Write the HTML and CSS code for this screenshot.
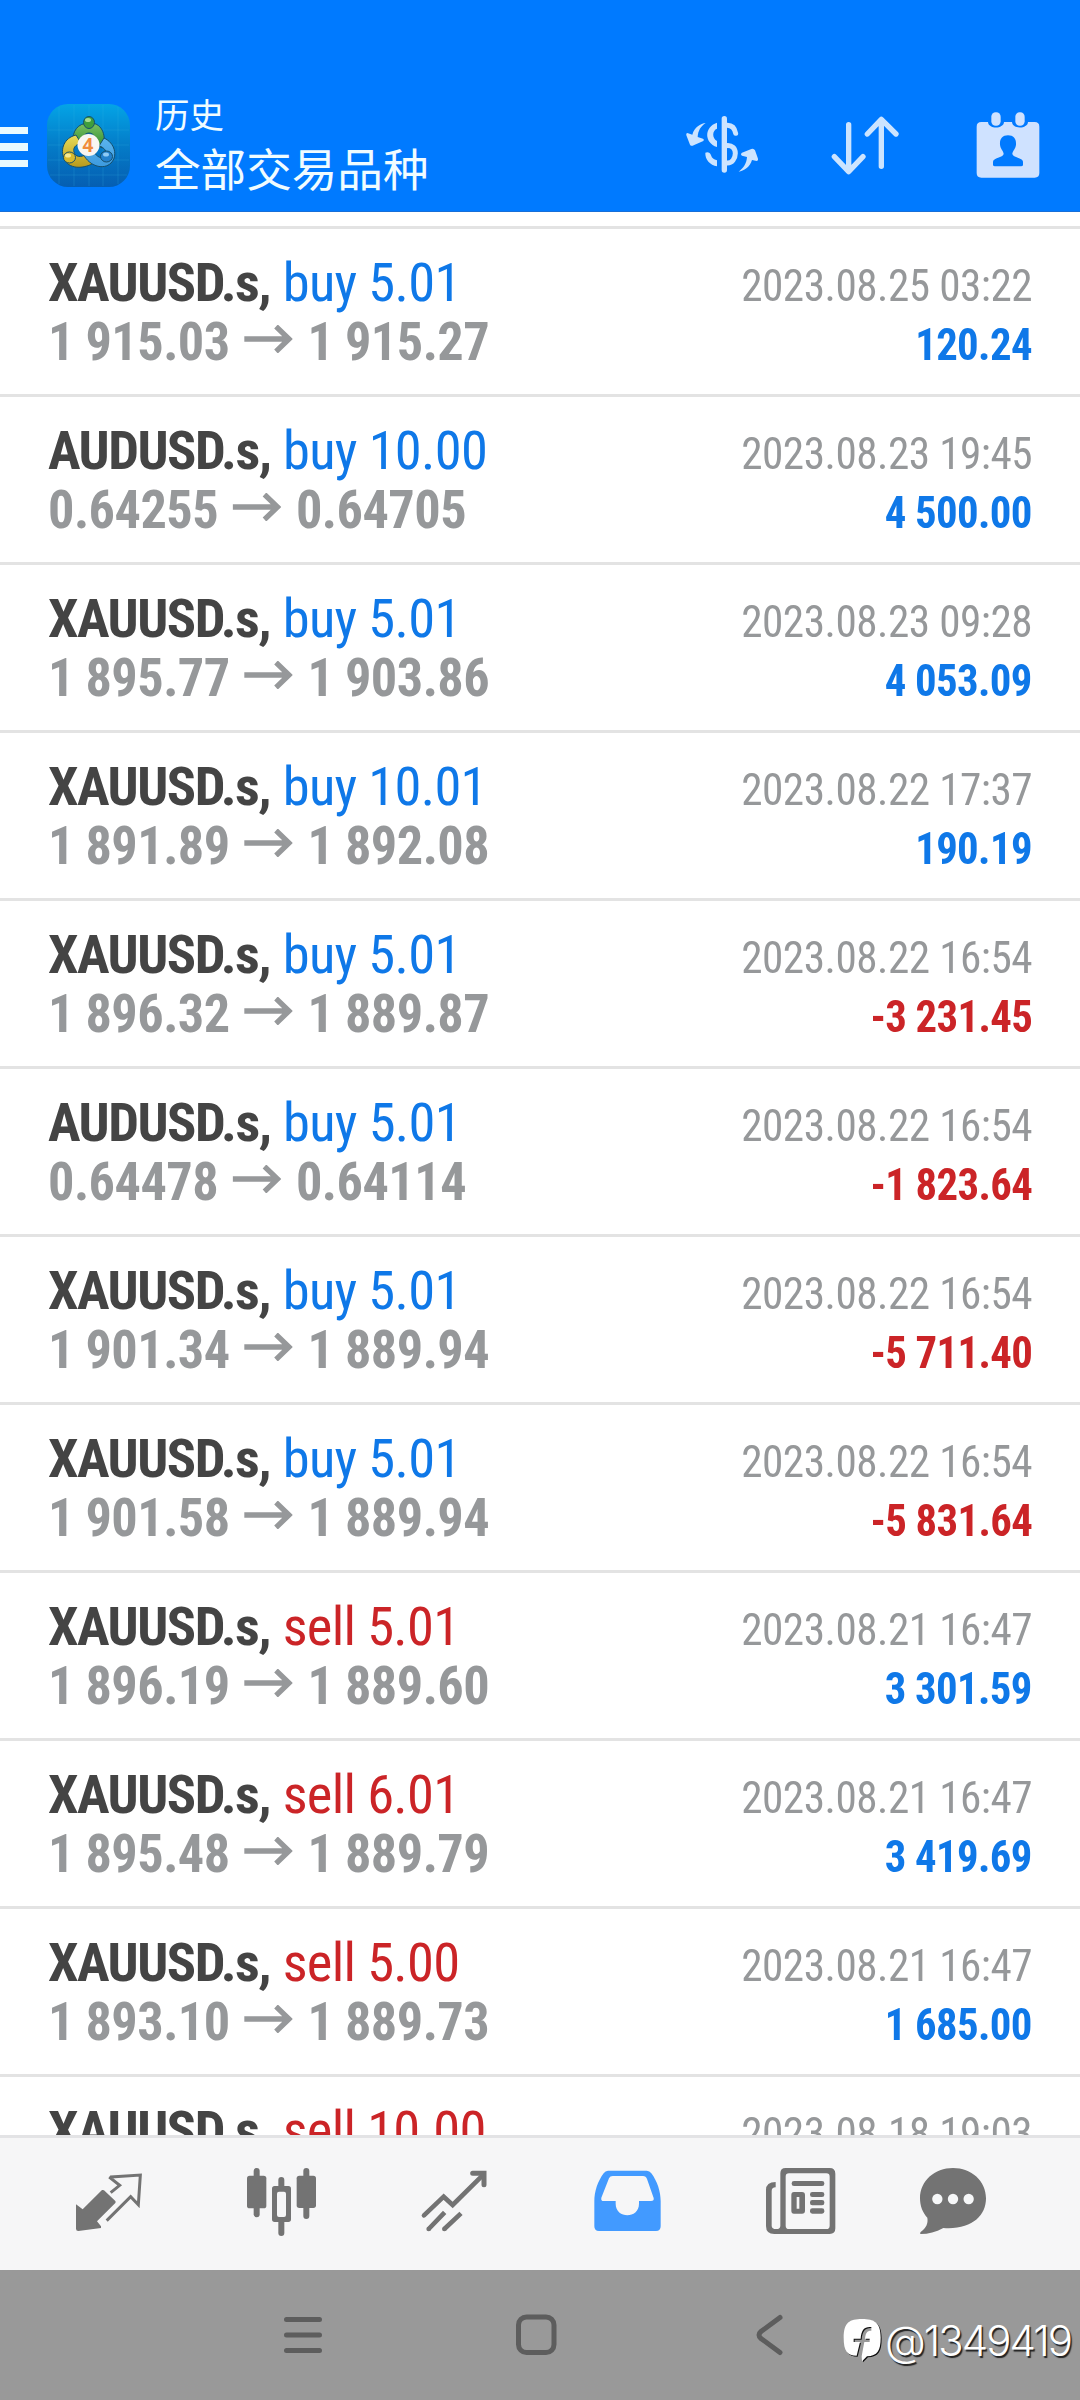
FILE: index.html
```html
<!DOCTYPE html>
<html lang="zh-CN">
<head>
<meta charset="utf-8">
<title>历史</title>
<link rel="stylesheet" href="styles.css">
</head>
<body>
<div class="screen">
  <header class="topbar">
    <div class="burger"><i></i><i></i><i></i></div>
    <svg class="logo" viewBox="0 0 83 83">
      <defs>
        <linearGradient id="bg" x1="0" y1="0" x2="0" y2="1"><stop offset="0" stop-color="#04a4e6"/><stop offset=".5" stop-color="#047cc8"/><stop offset="1" stop-color="#055eb2"/></linearGradient>
        <linearGradient id="gr" x1="0" y1="0" x2="0" y2="1"><stop offset="0" stop-color="#7cc263"/><stop offset="1" stop-color="#2c8b30"/></linearGradient>
        <linearGradient id="ye" x1="0" y1="0" x2="0" y2="1"><stop offset="0" stop-color="#e9dc58"/><stop offset="1" stop-color="#b99a1c"/></linearGradient>
        <linearGradient id="bl" x1="0" y1="0" x2="0" y2="1"><stop offset="0" stop-color="#5bb4ee"/><stop offset="1" stop-color="#3c9ade"/></linearGradient>
      </defs>
      <rect width="83" height="83" rx="21" fill="url(#bg)"/>
      <path d="M12 3V80M27 1V82M42 1V82M56 1V82M71 3V80M1 26H82M1 41H82M1 56H82M3 71H80" stroke="#35b4e6" stroke-opacity=".22" fill="none"/>
      <g stroke="#164f6b" stroke-width="1">
        <path d="M42 19C54 18 60 30 56 44L48 41C50 35 47 29 42 29S34 35 35 40L26 38C25 27 31 19 42 19Z" fill="url(#gr)"/>
        <path d="M29 31C17 34 13 45 17 55C22 65 35 65 45 60L40 50C34 54 28 53 27 48C26 44 28 41 34 39Z" fill="url(#ye)"/>
        <path d="M57 34C68 39 71 52 64 59C57 66 43 63 36 50L46 47C50 53 55 56 58 52C61 48 57 43 52 42Z" fill="url(#bl)"/>
        <ellipse cx="42" cy="18.500" rx="5.500" ry="6" fill="#3f9e3c"/>
        <ellipse cx="22.500" cy="53.500" rx="6" ry="5.500" fill="#d8b92c"/>
        <ellipse cx="59.500" cy="52.500" rx="6" ry="5.500" fill="#2381cd"/>
      </g>
      <ellipse cx="41" cy="16" rx="3" ry="2" fill="#a7dc90"/>
      <ellipse cx="21" cy="51.500" rx="3" ry="2" fill="#f7ea93"/>
      <ellipse cx="59" cy="50.500" rx="3" ry="2" fill="#8fcaf4"/>
      <circle cx="41.500" cy="41" r="11" fill="#f8f6f2"/>
      <text class="logo-digit" x="41" y="48" text-anchor="middle">4</text>
    </svg>
    <div class="titles">
      <div class="title">历史</div>
      <div class="subtitle">全部交易品种</div>
    </div>
    <div class="actions">
      <svg viewBox="66 48 240 240">
        <path d="M193 86V240" stroke="#cce4ff" stroke-width="16" stroke-linecap="round"/>
        <path d="M197 106C215 104 224 113 227 130M198 167C217 164 226 176 226 190S217 222 198 219" fill="none" stroke="#cce4ff" stroke-width="15" stroke-linecap="round"/>
        <path d="M171 98V116C157 121 155 143 171 153V171C132 158 132 111 171 98ZM136 188C143 184 151 188 153 196C156 205 161 208 171 211V229C150 225 135 209 136 188Z" fill="#cce4ff"/>
        <path d="M137 99C122 100 103 112 97 134L82 129Q77 130 79 136L90 164Q94 170 101 166L130 153Q134 148 129 146L113 141C114 122 122 109 137 99Z" fill="#cce4ff"/>
        <path d="M236 245C251 243 270 232 276 210L290 213Q296 212 294 206L285 181Q281 174 274 177L246 188Q240 193 246 197L261 201C260 220 250 235 236 245Z" fill="#cce4ff"/>
      </svg>
      <svg viewBox="495 48 240 240">
        <path d="M566 104V244M523 200L566 245L609 200M664 229V89M622 132L664 88L708 132" fill="none" stroke="#cce4ff" stroke-width="16" stroke-linecap="round" stroke-linejoin="round"/>
      </svg>
      <svg viewBox="924 48 240 240">
        <path d="M964 96H984C985 118 1031 118 1032 96H1056C1057 118 1103 118 1104 96H1124Q1138 96 1138 110V249Q1138 263 1124 263H964Q950 263 950 249V110Q950 96 964 96ZM1044 136C1027 136 1019 147 1020 163C1020 176 1031 184 1031 192C1029 203 999 203 999 216V224Q999 229 1005 229H1083Q1089 229 1089 224V216C1089 203 1059 203 1057 192C1057 184 1068 176 1068 163C1069 147 1061 136 1044 136Z" fill="#cfe2ff" fill-rule="evenodd"/>
        <rect x="994" y="67" width="28" height="40" rx="13" fill="#cfe2ff"/><rect x="1066" y="67" width="28" height="40" rx="13" fill="#cfe2ff"/>
      </svg>
    </div>
  </header>

  <main class="list" id="list"></main>

  <nav class="tabs">
    <svg viewBox="26 42 240 240">
      <path d="M125 120Q128 119 131 121L165 153Q167 156 165 159L110 214L122 229V234L54 243Q47 243 47 236V163L51 166L67 178Z" fill="#737373"/>
      <path d="M151 128L178 106L150 84L152 81L240 75L234 164L211 140L139 212" fill="none" stroke="#737373" stroke-width="9"/>
    </svg>
    <svg viewBox="545 42 240 240" fill="#737373">
      <rect x="580" y="54" width="18" height="148" rx="9"/><rect x="560" y="77" width="58" height="98" rx="8"/>
      <rect x="729" y="54" width="18" height="153" rx="9"/><rect x="709" y="77" width="58" height="97" rx="8"/>
      <rect x="654" y="81" width="18" height="40" rx="9"/><rect x="654" y="205" width="18" height="53" rx="9"/>
      <path d="M643 108H684Q692 108 692 116V208Q692 216 684 216H643Q635 216 635 208V116Q635 108 643 108ZM656 125Q650 125 650 131V195Q650 201 656 201H671Q677 201 677 195V131Q677 125 671 125Z" fill-rule="evenodd"/>
    </svg>
    <svg viewBox="1065 42 240 240" fill="none" stroke="#737373">
      <path d="M1092 196L1151 140L1178 165L1270 74" stroke-width="14" stroke-linecap="round"/>
      <path d="M1238 70H1272V104" stroke-width="15" stroke-linecap="round"/>
      <path d="M1106 237L1154 187M1153 237L1203 190" stroke-width="14"/>
      <path d="M1106 237h.1M1153 237h.1" stroke-width="14" stroke-linecap="round"/>
    </svg>
    <svg viewBox="24 42 240 240">
      <path d="M84 62H200Q209 62 214 70C232 94 242 125 242 153V229Q242 243 228 243H57Q43 243 43 229V153C43 125 53 94 71 70Q76 62 84 62ZM98 78Q90 78 87 85L64 143Q62 153 71 153H107V161C107 207 177 207 177 161V153H213Q223 153 221 144L201 87Q198 78 189 78Z" fill="#429aff" fill-rule="evenodd"/>
    </svg>
    <svg viewBox="544 42 240 240">
      <path d="M618 54H750Q767 54 767 71V235Q767 252 750 252H584Q559 252 559 228V120Q559 96 588 96V112Q576 112 576 123V227Q576 237 590 237Q602 237 602 227V70Q602 54 618 54ZM628 70Q618 70 618 80V227Q618 237 628 237H740Q750 237 750 227V80Q750 70 740 70Z" fill="#737373" fill-rule="evenodd"/>
      <rect x="636" y="93" width="98" height="15" rx="7" fill="#737373"/>
      <path d="M643 126H667Q676 126 676 135V182Q676 191 667 191H643Q635 191 635 182V135Q635 126 643 126ZM651 141V176H659V141Z" fill="#737373" fill-rule="evenodd"/>
      <g fill="#737373"><rect x="691" y="126" width="43" height="15" rx="7"/><rect x="691" y="150" width="43" height="16" rx="7"/><rect x="691" y="175" width="43" height="16" rx="7"/></g>
    </svg>
    <svg viewBox="999 42 240 240">
      <path d="M1119 54C1174 54 1218 92 1218 145S1174 240 1090 234C1067 246 1046 252 1022 252Q1018 250 1022 246C1038 234 1045 221 1042 203C1028 188 1020 168 1020 145C1020 92 1064 54 1119 54Z" fill="#737373"/>
      <g fill="#f6f7f8"><circle cx="1072" cy="147" r="15.500"/><circle cx="1119" cy="147" r="15.500"/><circle cx="1166" cy="147" r="15.500"/></g>
    </svg>
  </nav>

  <footer class="sysnav">
    <svg viewBox="0 0 60 60"><path d="M13.500 14.500H46.500M13.500 30H46.500M13.500 45.500H46.500"/></svg>
    <svg viewBox="0 0 60 60"><rect x="11.500" y="12" width="35.500" height="35.500" rx="8"/></svg>
    <svg viewBox="0 0 60 60"><path d="M40 12.500L21 26.500Q17 30 21 33.500L40 47.500"/></svg>
    <div class="watermark">
      <svg viewBox="308 60 126 144">
        <path d="M368 66C405 66 424 76 424 122C424 162 414 176 383 178L368 193L367 178Q372 150 375 135H391V125H377C379 108 382 101 396 101V90C375 88 366 98 364 125H343V135H362L352 176C324 176 313 162 313 122C313 76 331 66 368 66Z" fill="#fff"/>
      </svg>
      <span>@1349419</span>
    </div>
  </footer>
</div>
<script src="app.js"></script>
</body>
</html>
```
FILE: styles.css
```css
* { box-sizing: border-box; }
body { margin: 0; background: #fff; }
.screen {
  width: 1080px;
  height: 2400px;
  display: flex;
  flex-direction: column;
  overflow: hidden;
  font-family: "Roboto Condensed", Roboto, "Noto Sans CJK SC", sans-serif;
}
.topbar {
  height: 212px;
  flex: none;
  padding: 80px 32px 0 0;
  display: flex;
  align-items: center;
  background: #007aff;
  border-bottom: 1px solid #176fd8;
  color: #fff;
}
.burger { width: 28px; display: flex; flex-direction: column; gap: 9px; padding-top: 3px; }
.burger i { height: 7.5px; background: #e9faff; }
.logo { width: 83px; height: 83px; margin-left: 19px; }
.logo-digit { font: 700 19px "Open Sans", sans-serif; fill: #f08c3c; }
.titles { margin-left: 25px; padding-bottom: 1px; font-family: "Noto Sans CJK SC", sans-serif; color: #f0fcff; }
.title { font-size: 34.5px; line-height: 44px; }
.subtitle { font-size: 45.6px; line-height: 65px; }
.actions { margin-left: auto; display: flex; gap: 63px; }
.actions svg { width: 80px; height: 80px; }

.list { flex: 1; min-height: 0; overflow: hidden; padding-top: 14px; }
.deal { height: 168px; border-top: 3px solid #e3e3e3; padding: 24px 48px 0; }
.line { height: 59px; display: flex; justify-content: space-between; align-items: baseline; line-height: 59px; white-space: nowrap; }
.main { font-size: 54.5px; }
.symbol { font-weight: 700; color: #444; letter-spacing: -1.5px; }
.side { letter-spacing: -.7px; }
.buy, .plus { color: #0f78e8; }
.sell, .minus { color: #cb2427; }
.prices { font-size: 54.5px; font-weight: 700; color: #96989a; letter-spacing: -.55px; transform: scaleX(.96); transform-origin: left; }
.arrow { width: 51px; height: 28px; margin: 0 15px; vertical-align: 7px; fill: none; stroke: #96989a; stroke-width: 5.5; }
.date, .profit { font-size: 45px; transform-origin: right; }
.date { color: #96989a; letter-spacing: -.5px; transform: scaleX(.96); }
.profit { font-weight: 700; letter-spacing: -.65px; transform: scaleX(.95); }

.tabs {
  height: 135px;
  flex: none;
  border-top: 3px solid #e3e3e5;
  background: #f6f6f7;
  padding-left: 22px;
  display: grid;
  grid-template-columns: repeat(5, 173px) 132px;
  justify-items: center;
  align-items: center;
}
.tabs svg { width: 80px; height: 80px; }

.sysnav {
  position: relative;
  height: 130px;
  flex: none;
  background: #999;
  display: flex;
  gap: 173.5px;
  padding: 35px 0 0 273px;
}
.sysnav > svg { width: 60px; height: 60px; fill: none; stroke: #5d5d5d; stroke-width: 5; stroke-linecap: round; }
.watermark {
  position: absolute;
  left: 842px;
  top: 43px;
  display: flex;
  align-items: center;
  gap: 1px;
  color: #fff;
  font: 300 42px/56px Inter, sans-serif;
  letter-spacing: -2px;
  text-shadow: 1.5px 1.5px 1px #222;
}
.watermark svg { width: 42px; height: 48px; filter: drop-shadow(1.5px 1px 0 #111); }
```
FILE: app.js
```js
const deals = [
  ["XAUUSD.s", "buy", "5.01", "1 915.03", "1 915.27", "2023.08.25 03:22", "120.24"],
  ["AUDUSD.s", "buy", "10.00", "0.64255", "0.64705", "2023.08.23 19:45", "4 500.00"],
  ["XAUUSD.s", "buy", "5.01", "1 895.77", "1 903.86", "2023.08.23 09:28", "4 053.09"],
  ["XAUUSD.s", "buy", "10.01", "1 891.89", "1 892.08", "2023.08.22 17:37", "190.19"],
  ["XAUUSD.s", "buy", "5.01", "1 896.32", "1 889.87", "2023.08.22 16:54", "-3 231.45"],
  ["AUDUSD.s", "buy", "5.01", "0.64478", "0.64114", "2023.08.22 16:54", "-1 823.64"],
  ["XAUUSD.s", "buy", "5.01", "1 901.34", "1 889.94", "2023.08.22 16:54", "-5 711.40"],
  ["XAUUSD.s", "buy", "5.01", "1 901.58", "1 889.94", "2023.08.22 16:54", "-5 831.64"],
  ["XAUUSD.s", "sell", "5.01", "1 896.19", "1 889.60", "2023.08.21 16:47", "3 301.59"],
  ["XAUUSD.s", "sell", "6.01", "1 895.48", "1 889.79", "2023.08.21 16:47", "3 419.69"],
  ["XAUUSD.s", "sell", "5.00", "1 893.10", "1 889.73", "2023.08.21 16:47", "1 685.00"],
  ["XAUUSD.s", "sell", "10.00", "", "", "2023.08.18 19:03", ""]
];
const arrow = '<svg class="arrow" viewBox="0 0 50 28"><path d="M0 14H46M33 1.500L46.500 14L33 26.500"/></svg>';
document.getElementById("list").innerHTML = deals.map(([symbol, side, lots, open, close, date, profit]) => `
  <section class="deal">
    <div class="line">
      <span class="main"><span class="symbol">${symbol},</span> <span class="side ${side}">${side} ${lots}</span></span>
      <span class="date">${date}</span>
    </div>
    ${open && `<div class="line">
      <span class="prices">${open}${arrow}${close}</span>
      <span class="profit ${profit[0] === "-" ? "minus" : "plus"}">${profit}</span>
    </div>`}
  </section>`).join("");
```
